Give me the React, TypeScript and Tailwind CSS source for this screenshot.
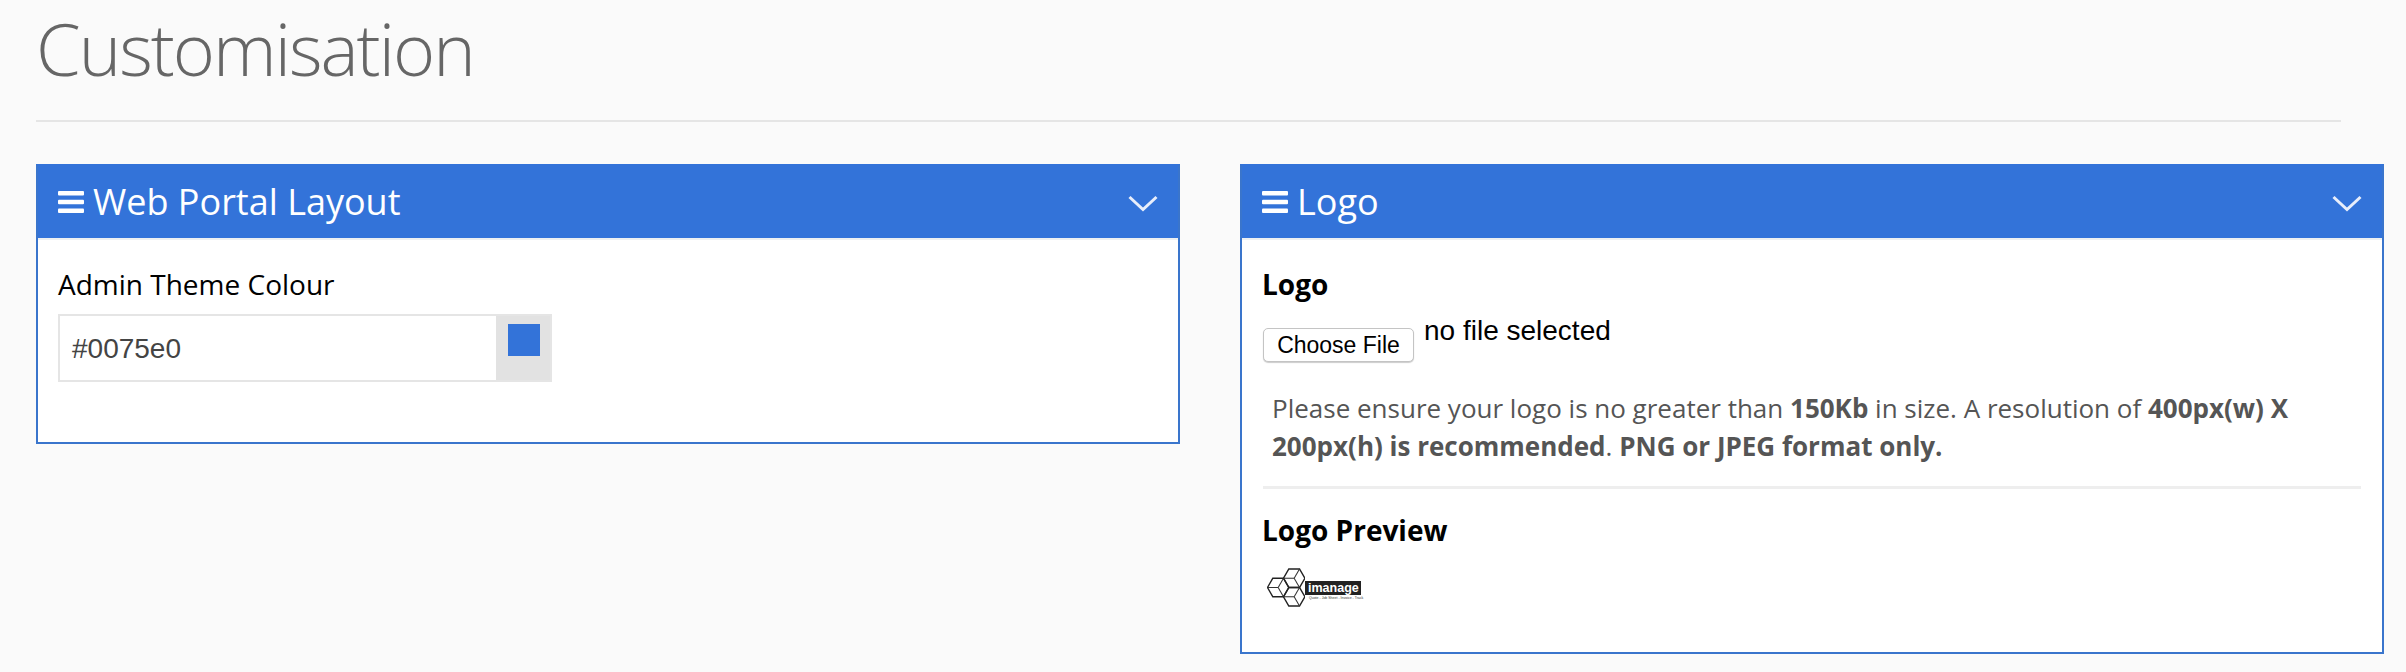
import type { ReactNode } from "react";

const openSans = { fontFamily: '"Open Sans", sans-serif' };
const arial = { fontFamily: '"Liberation Sans", sans-serif' };

function Bars() {
  return (
    <svg viewBox="0 0 26 22" className="w-[26px] h-[22px] shrink-0 fill-white">
      <rect x="0" y="0" width="26" height="4.5" rx="1" />
      <rect x="0" y="8.75" width="26" height="4.5" rx="1" />
      <rect x="0" y="17.5" width="26" height="4.5" rx="1" />
    </svg>
  );
}

function Panel({ title, children, className }: { title: string; children: ReactNode; className: string }) {
  return (
    <div className={"border-2 border-[#3a75cc] border-t-[#3373d9] bg-white " + className}>
      <div className="h-[72px] bg-[#3373d9] flex items-center justify-between px-[20px]">
        <div className="flex items-center gap-[9px] text-white text-[36px]">
          <Bars />
          <span>{title}</span>
        </div>
        <svg viewBox="0 0 30 18" className="w-[30px] h-[18px] mt-[3px] fill-none stroke-[#e8eefb] stroke-[3]">
          <path d="M1.5 2 L15 14.5 L28.5 2" />
        </svg>
      </div>
      <div className="h-[2px] bg-[#edf0f2]" />
      {children}
    </div>
  );
}

// one flat-topped hexagon with the three spokes that make it read as a cube
function Hex({ cx, cy }: { cx: number; cy: number }) {
  const r = 11.25;
  const pts = [0, 60, 120, 180, 240, 300].map((a) => [
    cx + r * Math.cos((a * Math.PI) / 180),
    cy + r * Math.sin((a * Math.PI) / 180),
  ]);
  return (
    <g>
      <polygon points={pts.map((p) => p.join(",")).join(" ")} className="stroke-[#222] stroke-[1.5]" />
      {[pts[1], pts[3], pts[5]].map((p, i) => (
        <line key={i} x1={cx} y1={cy} x2={p[0]} y2={p[1]} className="stroke-[#333] stroke-[1.1]" />
      ))}
    </g>
  );
}

function LogoMark() {
  return (
    <div className="flex items-start w-[94px] h-[39px]">
      <svg viewBox="0 0 40 39" className="w-[38px] h-[39px] shrink-0 fill-none">
        <Hex cx={11.75} cy={19.5} />
        <Hex cx={28.6} cy={9.75} />
        <Hex cx={28.6} cy={29.25} />
      </svg>
      <div className="flex flex-col mt-[13px] w-[56px]">
        <div className="bg-[#222] text-white text-[12.5px] leading-[14px] font-semibold pl-[3px] h-[14px]" style={arial}>
          imanage
        </div>
        <div className="text-[3.5px] leading-[6px] text-[#333] whitespace-nowrap pl-[4px]" style={arial}>
          Quote - Job Sheet - Invoice - Track
        </div>
      </div>
    </div>
  );
}

export default function App() {
  return (
    <div className="min-h-[672px] bg-[#fafafa] pl-[36px] pr-[22px]" style={openSans}>
      <div className="mr-[43px] border-b-2 border-[#e5e5e5] h-[122px]">
        <h1 className="text-[72px] font-light tracking-[-2px] text-[#666] leading-[97px]">Customisation</h1>
      </div>

      <div className="grid grid-cols-2 gap-[60px] items-start mt-[42px]">
        <Panel title="Web Portal Layout" className="h-[280px]">
          <div className="px-[20px] pt-[26px]">
            <div className="text-[28px] leading-[36px] text-black">Admin Theme Colour</div>
            <div className="flex w-[494px] h-[68px] mt-[12px] border-2 border-[#e5e5e5]">
              <div className="flex-1 flex items-center px-[12px] pt-[1px] text-[28px] text-[#444]" style={arial}>
                #0075e0
              </div>
              <div className="w-[54px] bg-[#e2e2e2] pl-[12px] pt-[8px]">
                <div className="w-[32px] h-[32px] bg-[#3373d9]" />
              </div>
            </div>
          </div>
        </Panel>

        <Panel title="Logo" className="h-[490px]">
          <div className="px-[21px] pt-[26px]">
            <div className="-ml-[1px] text-[28px] leading-[36px] font-bold text-black">Logo</div>
            <div className="flex items-start mt-[10px] h-[52px]" style={arial}>
              <div className="mt-[16px] w-[151px] h-[34px] pt-[1px] border border-[#c4c4c4] rounded-[5px] bg-white shadow-[0_1px_1px_rgba(0,0,0,0.2)] flex items-center justify-center text-[23px] text-black">
                Choose File
              </div>
              <div className="ml-[10px] mt-[1px] text-[28px] leading-[36px] text-black">no file selected</div>
            </div>
            <p className="mt-[25px] pl-[9px] text-[26px] leading-[38px] text-[#555]">
              Please ensure your logo is no greater than <b>150Kb</b> in size. A resolution of <b>400px(w) X 200px(h) is recommended</b>. <b>PNG or JPEG format only.</b>
            </p>
            <div className="mt-[21px] border-t-[3px] border-[#eeeeee]" />
            <div className="-ml-[1px] mt-[23px] text-[28px] leading-[36px] font-bold text-black">Logo Preview</div>
            <div className="mt-[20px] pl-[4px]">
              <LogoMark />
            </div>
          </div>
        </Panel>
      </div>
    </div>
  );
}
